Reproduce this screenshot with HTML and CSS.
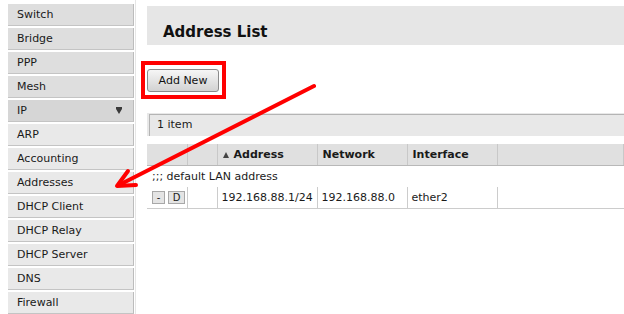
FILE: index.html
```html
<!DOCTYPE html>
<html>
<head>
<meta charset="utf-8">
<link rel="stylesheet" href="styles.css">
</head>
<body>
<div class="page">
  <nav class="sidebar">
    <div class="item">Switch</div>
    <div class="item">Bridge</div>
    <div class="item">PPP</div>
    <div class="item">Mesh</div>
    <div class="item open">IP <span class="caret"></span></div>
    <div class="item sub">ARP</div>
    <div class="item sub">Accounting</div>
    <div class="item sub">Addresses</div>
    <div class="item sub">DHCP Client</div>
    <div class="item sub">DHCP Relay</div>
    <div class="item sub">DHCP Server</div>
    <div class="item sub">DNS</div>
    <div class="item sub">Firewall</div>
  </nav>
  <main class="content">
    <div class="title-box"><h1 class="title">Address List</h1></div>
    <div class="actions"><button class="btn">Add New</button></div>
    <div class="count-bar"><div class="count-inner">1 item</div></div>
    <table class="grid">
      <colgroup>
        <col class="c1"><col class="c2"><col class="c3"><col class="c4"><col class="c5"><col>
      </colgroup>
      <thead>
        <tr>
          <th></th><th></th>
          <th><span class="sort"></span>Address</th>
          <th>Network</th>
          <th>Interface</th>
          <th></th>
        </tr>
      </thead>
      <tbody>
        <tr class="comment"><td colspan="6">;;; default LAN address</td></tr>
        <tr class="row">
          <td class="btns"><span class="mini">-</span><span class="mini wide">D</span></td>
          <td></td>
          <td>192.168.88.1/24</td>
          <td>192.168.88.0</td>
          <td>ether2</td>
          <td></td>
        </tr>
      </tbody>
    </table>
  </main>
  <svg class="annot" width="624" height="314" viewBox="0 0 624 314">
    <rect x="143" y="63" width="81" height="34" fill="none" stroke="#ff0000" stroke-width="4"/>
    <line x1="314" y1="86" x2="119" y2="185" stroke="#ff0000" stroke-width="4" stroke-linecap="round"/>
    <polyline points="128,171 117,186 136,185" fill="none" stroke="#ff0000" stroke-width="4" stroke-linecap="round" stroke-linejoin="round"/>
  </svg>
</div>
</body>
</html>
```

FILE: styles.css
```css
html, body {
  margin: 0;
  padding: 0;
  background: #ffffff;
}
body {
  font-family: "DejaVu Sans", Verdana, sans-serif;
  font-size: 11px;
  color: #1a1a1a;
}
.page {
  position: relative;
  width: 624px;
  height: 314px;
  overflow: hidden;
  display: flex;
  align-items: flex-start;
}
.sidebar {
  margin-left: 8px;
  padding-top: 2px;
  width: 126px;
  flex: none;
  display: flex;
  flex-direction: column;
  border-right: 1px solid #e6e6e6;
  padding-right: 1px;
  height: 330px;
}
.item {
  margin-top: 2px;
  height: 21px;
  line-height: 21px;
  padding-left: 9px;
  background: #dedede;
  border-bottom: 1px solid #c4c4c4;
  border-right: 1px solid #bcbcbc;
  position: relative;
  white-space: nowrap;
}
.item.open {
  background: #d6d6d6;
}
.item.sub {
  background: #e9e9e9;
}
.caret {
  position: absolute;
  right: 11px;
  top: 9px;
  width: 0;
  height: 0;
  border-left: 3px solid transparent;
  border-right: 3px solid transparent;
  border-top: 5px solid #3a3a3a;
}
.caret::before {
  content: "";
  position: absolute;
  left: -3px;
  top: -7px;
  width: 6px;
  height: 2px;
  background: #3a3a3a;
}
.content {
  margin-left: 11px;
  flex: 1;
  min-width: 0;
  display: flex;
  flex-direction: column;
}
.title-box {
  margin-top: 6px;
  height: 39px;
  background: #e6e6e6;
  display: flex;
  align-items: flex-end;
}
.title {
  margin: 0 0 4px 16px;
  font-size: 15px;
  font-weight: bold;
  color: #111;
  line-height: 18px;
}
.actions {
  margin-top: 24px;
  display: flex;
}
.btn {
  width: 72px;
  height: 23px;
  padding: 0;
  font-family: "DejaVu Sans", Verdana, sans-serif;
  font-size: 11px;
  color: #111;
  border: 1px solid #8a8a8a;
  border-radius: 3px;
  background: linear-gradient(#f6f6f6, #d2d2d2);
}
.count-bar {
  margin-top: 21px;
  height: 23px;
  background: #e8e8e8;
  padding: 1px 0 0 2px;
  box-sizing: border-box;
  display: flex;
}
.count-inner {
  flex: 1;
  border-left: 1px solid #b4b4b4;
  border-top: 1px solid #b4b4b4;
  padding-left: 7px;
  line-height: 19px;
}
.grid {
  margin-top: 8px;
  width: 100%;
  border-collapse: collapse;
  table-layout: fixed;
}
.c1 { width: 40px; }
.c2 { width: 30px; }
.c3 { width: 100px; }
.c4 { width: 90px; }
.c5 { width: 90px; }
.grid th {
  height: 21px;
  background: #e0e0e0;
  border-bottom: 1px solid #b8b8b8;
  border-right: 1px solid #c8c8c8;
  text-align: left;
  padding: 0 0 0 5px;
  font-weight: bold;
  white-space: nowrap;
}
.sort {
  display: inline-block;
  width: 0;
  height: 0;
  border-left: 3px solid transparent;
  border-right: 3px solid transparent;
  border-bottom: 6px solid #444;
  margin-right: 5px;
  vertical-align: 0;
}
.comment td {
  height: 21px;
  padding: 0 0 0 5px;
}
.row td {
  height: 21px;
  padding: 0 0 0 4px;
  border-right: 1px solid #cccccc;
  border-bottom: 1px solid #cccccc;
  white-space: nowrap;
}
.row td:last-child {
  border-right: none;
}
.btns {
  padding-left: 5px !important;
}
.mini {
  display: inline-block;
  width: 11px;
  height: 11px;
  line-height: 11px;
  text-align: center;
  background: #e4e4e4;
  border: 1px solid #a8a8a8;
  margin-right: 3px;
  font-size: 10px;
  vertical-align: middle;
}
.mini.wide {
  width: 15px;
}
.annot {
  position: absolute;
  left: 0;
  top: 0;
  pointer-events: none;
}
```
